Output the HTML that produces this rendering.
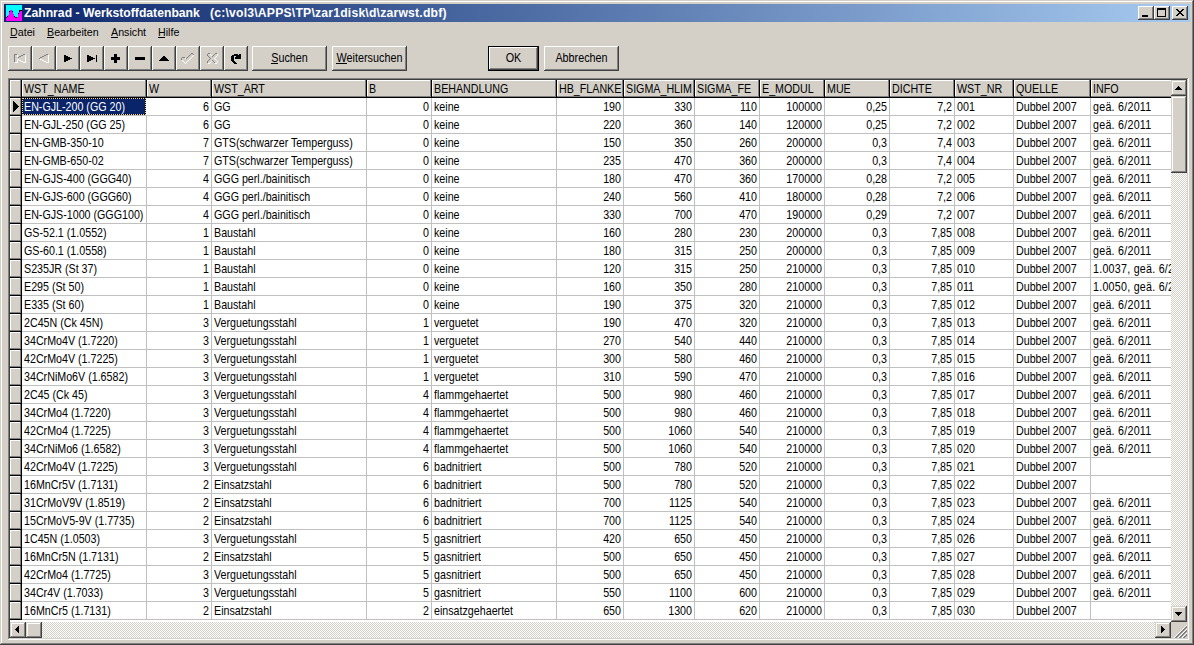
<!DOCTYPE html><html><head><meta charset="utf-8"><style>
*{margin:0;padding:0}
html,body{width:1194px;height:645px;overflow:hidden;background:#D4D0C8}
body{position:relative;font-family:"Liberation Sans",sans-serif}
div,span,svg{position:absolute}
span{white-space:nowrap;line-height:13px}
.g{font-size:10.7px;line-height:13px;transform:scaleY(1.2);transform-origin:0 10px}
.m{font-size:10.7px;line-height:13px;color:#000}
.b{font-size:10.8px;line-height:13px;text-align:center;color:#000;transform:scaleY(1.2);transform-origin:0 10px}
.tt{font-size:12.2px;font-weight:bold;color:#fff;line-height:18px}
u{text-decoration:none;border-bottom:1px solid #000}
</style></head><body><div style="left:0px;top:0px;width:1193px;height:1px;background:#D4D0C8;"></div><div style="left:0px;top:0px;width:1px;height:644px;background:#D4D0C8;"></div><div style="left:1px;top:1px;width:1191px;height:1px;background:#FFFFFF;"></div><div style="left:1px;top:1px;width:1px;height:642px;background:#FFFFFF;"></div><div style="left:0px;top:644px;width:1194px;height:1px;background:#404040;"></div><div style="left:1193px;top:0px;width:1px;height:645px;background:#404040;"></div><div style="left:1px;top:643px;width:1192px;height:1px;background:#808080;"></div><div style="left:1192px;top:1px;width:1px;height:643px;background:#808080;"></div><div style="left:4px;top:4px;width:1186px;height:18px;background:linear-gradient(to right,#0A246A,#A6CAF0);"></div><svg width="16" height="16" shape-rendering="crispEdges" style="position:absolute;left:6px;top:5px"><rect width="16" height="16" fill="#00FFFF"/><rect x="0" y="13" width="1" height="3" fill="#FF00FF"/><rect x="1" y="12" width="1" height="4" fill="#FF00FF"/><rect x="2" y="10" width="1" height="6" fill="#FF00FF"/><rect x="3" y="7" width="1" height="9" fill="#FF00FF"/><rect x="4" y="5" width="1" height="11" fill="#FF00FF"/><rect x="5" y="5" width="1" height="11" fill="#FF00FF"/><rect x="6" y="7" width="1" height="9" fill="#FF00FF"/><rect x="7" y="9" width="1" height="7" fill="#FF00FF"/><rect x="8" y="12" width="1" height="4" fill="#FF00FF"/><rect x="9" y="13" width="1" height="3" fill="#FF00FF"/><rect x="10" y="13" width="1" height="3" fill="#FF00FF"/><rect x="11" y="12" width="1" height="4" fill="#FF00FF"/><rect x="12" y="9" width="1" height="7" fill="#FF00FF"/><rect x="13" y="7" width="1" height="9" fill="#FF00FF"/><rect x="14" y="6" width="1" height="10" fill="#FF00FF"/><rect x="15" y="6" width="1" height="10" fill="#FF00FF"/><rect x="0" y="12" width="1" height="1" fill="#000"/><rect x="1" y="11" width="1" height="1" fill="#000"/><rect x="3" y="6" width="1" height="1" fill="#000"/><rect x="6" y="6" width="1" height="1" fill="#000"/><rect x="8" y="11" width="1" height="1" fill="#000"/><rect x="9" y="12" width="1" height="1" fill="#000"/><rect x="10" y="12" width="1" height="1" fill="#000"/><rect x="12" y="8" width="1" height="1" fill="#000"/><rect x="13" y="6" width="1" height="1" fill="#000"/><rect x="13" y="5" width="1" height="1" fill="#000"/><rect x="14" y="5" width="1" height="1" fill="#000"/><rect x="15" y="5" width="1" height="1" fill="#000"/></svg><span class="tt" style="left:24px;top:4px">Zahnrad - Werkstoffdatenbank</span><span class="tt" style="left:210px;top:4px;letter-spacing:0.2px">(c:\vol3\APPS\TP\zar1disk\d\zarwst.dbf)</span><div style="left:1138px;top:6px;width:16px;height:14px;background:#D4D0C8;"></div><div style="left:1138px;top:6px;width:16px;height:1px;background:#FFFFFF;"></div><div style="left:1138px;top:6px;width:1px;height:14px;background:#FFFFFF;"></div><div style="left:1138px;top:19px;width:16px;height:1px;background:#404040;"></div><div style="left:1153px;top:6px;width:1px;height:14px;background:#404040;"></div><div style="left:1139px;top:18px;width:14px;height:1px;background:#808080;"></div><div style="left:1152px;top:7px;width:1px;height:12px;background:#808080;"></div><div style="left:1154px;top:6px;width:16px;height:14px;background:#D4D0C8;"></div><div style="left:1154px;top:6px;width:16px;height:1px;background:#FFFFFF;"></div><div style="left:1154px;top:6px;width:1px;height:14px;background:#FFFFFF;"></div><div style="left:1154px;top:19px;width:16px;height:1px;background:#404040;"></div><div style="left:1169px;top:6px;width:1px;height:14px;background:#404040;"></div><div style="left:1155px;top:18px;width:14px;height:1px;background:#808080;"></div><div style="left:1168px;top:7px;width:1px;height:12px;background:#808080;"></div><div style="left:1172px;top:6px;width:16px;height:14px;background:#D4D0C8;"></div><div style="left:1172px;top:6px;width:16px;height:1px;background:#FFFFFF;"></div><div style="left:1172px;top:6px;width:1px;height:14px;background:#FFFFFF;"></div><div style="left:1172px;top:19px;width:16px;height:1px;background:#404040;"></div><div style="left:1187px;top:6px;width:1px;height:14px;background:#404040;"></div><div style="left:1173px;top:18px;width:14px;height:1px;background:#808080;"></div><div style="left:1186px;top:7px;width:1px;height:12px;background:#808080;"></div><div style="left:1142px;top:15px;width:6px;height:2px;background:#000;"></div><div style="left:1157px;top:8px;width:9px;height:9px;background:transparent;border:1px solid #000;border-top-width:2px;box-sizing:border-box;"></div><svg width="16" height="14" style="position:absolute;left:1172px;top:6px" shape-rendering="crispEdges"><rect x="4" y="3" width="2" height="1" fill="#000"/><rect x="10" y="3" width="2" height="1" fill="#000"/><rect x="5" y="4" width="2" height="1" fill="#000"/><rect x="9" y="4" width="2" height="1" fill="#000"/><rect x="6" y="5" width="2" height="1" fill="#000"/><rect x="8" y="5" width="2" height="1" fill="#000"/><rect x="7" y="6" width="2" height="1" fill="#000"/><rect x="7" y="6" width="2" height="1" fill="#000"/><rect x="8" y="7" width="2" height="1" fill="#000"/><rect x="6" y="7" width="2" height="1" fill="#000"/><rect x="9" y="8" width="2" height="1" fill="#000"/><rect x="5" y="8" width="2" height="1" fill="#000"/><rect x="10" y="9" width="2" height="1" fill="#000"/><rect x="4" y="9" width="2" height="1" fill="#000"/></svg><span class="m" style="left:10px;top:26px;">Datei</span><div style="left:10px;top:37px;width:7px;height:1px;background:#000;"></div><span class="m" style="left:47px;top:26px;">Bearbeiten</span><div style="left:47px;top:37px;width:7px;height:1px;background:#000;"></div><span class="m" style="left:111px;top:26px;">Ansicht</span><div style="left:111px;top:37px;width:7px;height:1px;background:#000;"></div><span class="m" style="left:158px;top:26px;">Hilfe</span><div style="left:158px;top:37px;width:7px;height:1px;background:#000;"></div><div style="left:8px;top:46px;width:24px;height:25px;background:#D4D0C8;"></div><div style="left:8px;top:46px;width:24px;height:1px;background:#FFFFFF;"></div><div style="left:8px;top:46px;width:1px;height:25px;background:#FFFFFF;"></div><div style="left:8px;top:70px;width:24px;height:1px;background:#404040;"></div><div style="left:31px;top:46px;width:1px;height:25px;background:#404040;"></div><div style="left:9px;top:69px;width:22px;height:1px;background:#808080;"></div><div style="left:30px;top:47px;width:1px;height:23px;background:#808080;"></div><div style="left:32px;top:46px;width:24px;height:25px;background:#D4D0C8;"></div><div style="left:32px;top:46px;width:24px;height:1px;background:#FFFFFF;"></div><div style="left:32px;top:46px;width:1px;height:25px;background:#FFFFFF;"></div><div style="left:32px;top:70px;width:24px;height:1px;background:#404040;"></div><div style="left:55px;top:46px;width:1px;height:25px;background:#404040;"></div><div style="left:33px;top:69px;width:22px;height:1px;background:#808080;"></div><div style="left:54px;top:47px;width:1px;height:23px;background:#808080;"></div><div style="left:56px;top:46px;width:24px;height:25px;background:#D4D0C8;"></div><div style="left:56px;top:46px;width:24px;height:1px;background:#FFFFFF;"></div><div style="left:56px;top:46px;width:1px;height:25px;background:#FFFFFF;"></div><div style="left:56px;top:70px;width:24px;height:1px;background:#404040;"></div><div style="left:79px;top:46px;width:1px;height:25px;background:#404040;"></div><div style="left:57px;top:69px;width:22px;height:1px;background:#808080;"></div><div style="left:78px;top:47px;width:1px;height:23px;background:#808080;"></div><div style="left:80px;top:46px;width:24px;height:25px;background:#D4D0C8;"></div><div style="left:80px;top:46px;width:24px;height:1px;background:#FFFFFF;"></div><div style="left:80px;top:46px;width:1px;height:25px;background:#FFFFFF;"></div><div style="left:80px;top:70px;width:24px;height:1px;background:#404040;"></div><div style="left:103px;top:46px;width:1px;height:25px;background:#404040;"></div><div style="left:81px;top:69px;width:22px;height:1px;background:#808080;"></div><div style="left:102px;top:47px;width:1px;height:23px;background:#808080;"></div><div style="left:104px;top:46px;width:24px;height:25px;background:#D4D0C8;"></div><div style="left:104px;top:46px;width:24px;height:1px;background:#FFFFFF;"></div><div style="left:104px;top:46px;width:1px;height:25px;background:#FFFFFF;"></div><div style="left:104px;top:70px;width:24px;height:1px;background:#404040;"></div><div style="left:127px;top:46px;width:1px;height:25px;background:#404040;"></div><div style="left:105px;top:69px;width:22px;height:1px;background:#808080;"></div><div style="left:126px;top:47px;width:1px;height:23px;background:#808080;"></div><div style="left:128px;top:46px;width:24px;height:25px;background:#D4D0C8;"></div><div style="left:128px;top:46px;width:24px;height:1px;background:#FFFFFF;"></div><div style="left:128px;top:46px;width:1px;height:25px;background:#FFFFFF;"></div><div style="left:128px;top:70px;width:24px;height:1px;background:#404040;"></div><div style="left:151px;top:46px;width:1px;height:25px;background:#404040;"></div><div style="left:129px;top:69px;width:22px;height:1px;background:#808080;"></div><div style="left:150px;top:47px;width:1px;height:23px;background:#808080;"></div><div style="left:152px;top:46px;width:24px;height:25px;background:#D4D0C8;"></div><div style="left:152px;top:46px;width:24px;height:1px;background:#FFFFFF;"></div><div style="left:152px;top:46px;width:1px;height:25px;background:#FFFFFF;"></div><div style="left:152px;top:70px;width:24px;height:1px;background:#404040;"></div><div style="left:175px;top:46px;width:1px;height:25px;background:#404040;"></div><div style="left:153px;top:69px;width:22px;height:1px;background:#808080;"></div><div style="left:174px;top:47px;width:1px;height:23px;background:#808080;"></div><div style="left:176px;top:46px;width:24px;height:25px;background:#D4D0C8;"></div><div style="left:176px;top:46px;width:24px;height:1px;background:#FFFFFF;"></div><div style="left:176px;top:46px;width:1px;height:25px;background:#FFFFFF;"></div><div style="left:176px;top:70px;width:24px;height:1px;background:#404040;"></div><div style="left:199px;top:46px;width:1px;height:25px;background:#404040;"></div><div style="left:177px;top:69px;width:22px;height:1px;background:#808080;"></div><div style="left:198px;top:47px;width:1px;height:23px;background:#808080;"></div><div style="left:200px;top:46px;width:24px;height:25px;background:#D4D0C8;"></div><div style="left:200px;top:46px;width:24px;height:1px;background:#FFFFFF;"></div><div style="left:200px;top:46px;width:1px;height:25px;background:#FFFFFF;"></div><div style="left:200px;top:70px;width:24px;height:1px;background:#404040;"></div><div style="left:223px;top:46px;width:1px;height:25px;background:#404040;"></div><div style="left:201px;top:69px;width:22px;height:1px;background:#808080;"></div><div style="left:222px;top:47px;width:1px;height:23px;background:#808080;"></div><div style="left:224px;top:46px;width:24px;height:25px;background:#D4D0C8;"></div><div style="left:224px;top:46px;width:24px;height:1px;background:#FFFFFF;"></div><div style="left:224px;top:46px;width:1px;height:25px;background:#FFFFFF;"></div><div style="left:224px;top:70px;width:24px;height:1px;background:#404040;"></div><div style="left:247px;top:46px;width:1px;height:25px;background:#404040;"></div><div style="left:225px;top:69px;width:22px;height:1px;background:#808080;"></div><div style="left:246px;top:47px;width:1px;height:23px;background:#808080;"></div><svg width="12" height="9" style="position:absolute;left:14px;top:54px" shape-rendering="crispEdges"><rect x="0" y="0" width="3" height="1" fill="#808080"/><rect x="0" y="1" width="1" height="7" fill="#808080"/><rect x="4" y="3" width="1" height="1" fill="#808080"/><rect x="5" y="2" width="2" height="1" fill="#808080"/><rect x="7" y="1" width="2" height="1" fill="#808080"/><rect x="9" y="0" width="2" height="1" fill="#808080"/><rect x="3" y="1" width="1" height="2" fill="#FFFFFF"/><rect x="1" y="8" width="3" height="1" fill="#FFFFFF"/><rect x="3" y="5" width="1" height="3" fill="#FFFFFF"/><rect x="4" y="5" width="1" height="1" fill="#FFFFFF"/><rect x="5" y="6" width="2" height="1" fill="#FFFFFF"/><rect x="7" y="7" width="2" height="1" fill="#FFFFFF"/><rect x="9" y="8" width="2" height="1" fill="#FFFFFF"/><rect x="11" y="1" width="1" height="8" fill="#FFFFFF"/></svg><svg width="10" height="9" style="position:absolute;left:39px;top:54px" shape-rendering="crispEdges"><rect x="0" y="4" width="1" height="1" fill="#808080"/><rect x="1" y="3" width="2" height="1" fill="#808080"/><rect x="3" y="2" width="2" height="1" fill="#808080"/><rect x="5" y="1" width="2" height="1" fill="#808080"/><rect x="7" y="0" width="2" height="1" fill="#808080"/><rect x="1" y="5" width="2" height="1" fill="#FFFFFF"/><rect x="3" y="6" width="2" height="1" fill="#FFFFFF"/><rect x="5" y="7" width="2" height="1" fill="#FFFFFF"/><rect x="7" y="8" width="3" height="1" fill="#FFFFFF"/><rect x="9" y="1" width="1" height="8" fill="#FFFFFF"/></svg><svg width="8" height="7" style="position:absolute;left:64px;top:55px" shape-rendering="crispEdges"><rect x="0" y="0" width="2" height="7" fill="#000"/><rect x="2" y="1" width="2" height="5" fill="#000"/><rect x="4" y="2" width="2" height="3" fill="#000"/><rect x="6" y="3" width="2" height="1" fill="#000"/></svg><svg width="10" height="7" style="position:absolute;left:87px;top:55px" shape-rendering="crispEdges"><rect x="0" y="0" width="2" height="7" fill="#000"/><rect x="2" y="1" width="2" height="5" fill="#000"/><rect x="4" y="2" width="2" height="3" fill="#000"/><rect x="6" y="3" width="2" height="1" fill="#000"/><rect x="9" y="0" width="1" height="7" fill="#000"/></svg><svg width="9" height="9" style="position:absolute;left:111px;top:54px" shape-rendering="crispEdges"><rect x="3" y="0" width="3" height="9" fill="#000"/><rect x="0" y="3" width="9" height="3" fill="#000"/></svg><svg width="10" height="3" style="position:absolute;left:135px;top:57px" shape-rendering="crispEdges"><rect x="0" y="0" width="10" height="3" fill="#000"/></svg><svg width="10" height="5" style="position:absolute;left:159px;top:56px" shape-rendering="crispEdges"><rect x="4" y="0" width="2" height="1" fill="#000"/><rect x="3" y="1" width="4" height="1" fill="#000"/><rect x="2" y="2" width="6" height="1" fill="#000"/><rect x="1" y="3" width="8" height="1" fill="#000"/><rect x="0" y="4" width="10" height="1" fill="#000"/></svg><svg width="13" height="11" style="position:absolute;left:181px;top:53px" shape-rendering="crispEdges"><rect x="0" y="5" width="1" height="2" fill="#808080"/><rect x="1" y="4" width="3" height="1" fill="#808080"/><rect x="5" y="5" width="1" height="1" fill="#808080"/><rect x="6" y="4" width="1" height="1" fill="#808080"/><rect x="7" y="3" width="1" height="1" fill="#808080"/><rect x="8" y="2" width="1" height="1" fill="#808080"/><rect x="9" y="1" width="1" height="1" fill="#808080"/><rect x="10" y="0" width="2" height="1" fill="#808080"/><rect x="12" y="1" width="1" height="1" fill="#808080"/><rect x="4" y="5" width="1" height="1" fill="#FFFFFF"/><rect x="1" y="7" width="1" height="1" fill="#FFFFFF"/><rect x="2" y="8" width="1" height="1" fill="#FFFFFF"/><rect x="3" y="9" width="1" height="1" fill="#FFFFFF"/><rect x="4" y="10" width="1" height="1" fill="#FFFFFF"/><rect x="5" y="9" width="1" height="1" fill="#FFFFFF"/><rect x="6" y="8" width="1" height="1" fill="#FFFFFF"/><rect x="7" y="7" width="1" height="1" fill="#FFFFFF"/><rect x="8" y="6" width="1" height="1" fill="#FFFFFF"/><rect x="9" y="5" width="1" height="1" fill="#FFFFFF"/><rect x="10" y="4" width="1" height="1" fill="#FFFFFF"/><rect x="11" y="3" width="1" height="1" fill="#FFFFFF"/><rect x="12" y="2" width="1" height="1" fill="#FFFFFF"/></svg><svg width="11" height="11" style="position:absolute;left:207px;top:53px" shape-rendering="crispEdges"><rect x="1" y="0" width="2" height="1" fill="#808080"/><rect x="0" y="1" width="1" height="2" fill="#808080"/><rect x="1" y="3" width="1" height="1" fill="#808080"/><rect x="2" y="4" width="1" height="1" fill="#808080"/><rect x="3" y="5" width="1" height="1" fill="#808080"/><rect x="2" y="6" width="1" height="1" fill="#808080"/><rect x="1" y="7" width="1" height="1" fill="#808080"/><rect x="0" y="8" width="1" height="2" fill="#808080"/><rect x="5" y="3" width="1" height="1" fill="#808080"/><rect x="6" y="2" width="1" height="1" fill="#808080"/><rect x="7" y="1" width="1" height="1" fill="#808080"/><rect x="8" y="0" width="2" height="1" fill="#808080"/><rect x="5" y="7" width="1" height="1" fill="#808080"/><rect x="6" y="8" width="1" height="1" fill="#808080"/><rect x="7" y="9" width="1" height="1" fill="#808080"/><rect x="3" y="1" width="1" height="1" fill="#FFFFFF"/><rect x="4" y="2" width="1" height="1" fill="#FFFFFF"/><rect x="10" y="1" width="1" height="2" fill="#FFFFFF"/><rect x="9" y="3" width="1" height="1" fill="#FFFFFF"/><rect x="8" y="4" width="1" height="1" fill="#FFFFFF"/><rect x="7" y="5" width="1" height="1" fill="#FFFFFF"/><rect x="8" y="6" width="1" height="1" fill="#FFFFFF"/><rect x="9" y="7" width="1" height="1" fill="#FFFFFF"/><rect x="10" y="8" width="1" height="2" fill="#FFFFFF"/><rect x="4" y="8" width="1" height="1" fill="#FFFFFF"/><rect x="3" y="9" width="1" height="1" fill="#FFFFFF"/><rect x="1" y="10" width="2" height="1" fill="#FFFFFF"/><rect x="8" y="10" width="2" height="1" fill="#FFFFFF"/></svg><svg width="10" height="10" style="position:absolute;left:231px;top:54px" shape-rendering="crispEdges"><rect x="3" y="0" width="4" height="1" fill="#000"/><rect x="8" y="0" width="2" height="1" fill="#000"/><rect x="1" y="1" width="7" height="1" fill="#000"/><rect x="8" y="1" width="2" height="1" fill="#000"/><rect x="0" y="2" width="3" height="1" fill="#000"/><rect x="5" y="2" width="5" height="1" fill="#000"/><rect x="0" y="3" width="3" height="1" fill="#000"/><rect x="4" y="3" width="6" height="1" fill="#000"/><rect x="0" y="4" width="3" height="1" fill="#000"/><rect x="4" y="4" width="6" height="1" fill="#000"/><rect x="0" y="5" width="3" height="1" fill="#000"/><rect x="0" y="6" width="3" height="1" fill="#000"/><rect x="1" y="7" width="3" height="1" fill="#000"/><rect x="2" y="8" width="3" height="1" fill="#000"/><rect x="3" y="9" width="3" height="1" fill="#000"/></svg><div style="left:252px;top:46px;width:75px;height:25px;background:#D4D0C8;"></div><div style="left:252px;top:46px;width:75px;height:1px;background:#FFFFFF;"></div><div style="left:252px;top:46px;width:1px;height:25px;background:#FFFFFF;"></div><div style="left:252px;top:70px;width:75px;height:1px;background:#404040;"></div><div style="left:326px;top:46px;width:1px;height:25px;background:#404040;"></div><div style="left:253px;top:69px;width:73px;height:1px;background:#808080;"></div><div style="left:325px;top:47px;width:1px;height:23px;background:#808080;"></div><span class="b" style="left:252px;width:75px;top:52px">Suchen</span><div style="left:332px;top:46px;width:75px;height:25px;background:#D4D0C8;"></div><div style="left:332px;top:46px;width:75px;height:1px;background:#FFFFFF;"></div><div style="left:332px;top:46px;width:1px;height:25px;background:#FFFFFF;"></div><div style="left:332px;top:70px;width:75px;height:1px;background:#404040;"></div><div style="left:406px;top:46px;width:1px;height:25px;background:#404040;"></div><div style="left:333px;top:69px;width:73px;height:1px;background:#808080;"></div><div style="left:405px;top:47px;width:1px;height:23px;background:#808080;"></div><span class="b" style="left:332px;width:75px;top:52px">Weitersuchen</span><div style="left:271px;top:63px;width:7px;height:1px;background:#000;"></div><div style="left:336px;top:63px;width:11px;height:1px;background:#000;"></div><div style="left:488px;top:46px;width:51px;height:25px;background:#000;"></div><div style="left:489px;top:47px;width:49px;height:23px;background:#D4D0C8;"></div><div style="left:489px;top:47px;width:49px;height:1px;background:#FFFFFF;"></div><div style="left:489px;top:47px;width:1px;height:23px;background:#FFFFFF;"></div><div style="left:489px;top:69px;width:49px;height:1px;background:#404040;"></div><div style="left:537px;top:47px;width:1px;height:23px;background:#404040;"></div><div style="left:490px;top:68px;width:47px;height:1px;background:#808080;"></div><div style="left:536px;top:48px;width:1px;height:21px;background:#808080;"></div><span class="b" style="left:488px;width:51px;top:52px">OK</span><div style="left:544px;top:46px;width:75px;height:25px;background:#D4D0C8;"></div><div style="left:544px;top:46px;width:75px;height:1px;background:#FFFFFF;"></div><div style="left:544px;top:46px;width:1px;height:25px;background:#FFFFFF;"></div><div style="left:544px;top:70px;width:75px;height:1px;background:#404040;"></div><div style="left:618px;top:46px;width:1px;height:25px;background:#404040;"></div><div style="left:545px;top:69px;width:73px;height:1px;background:#808080;"></div><div style="left:617px;top:47px;width:1px;height:23px;background:#808080;"></div><span class="b" style="left:544px;width:75px;top:52px">Abbrechen</span><div style="left:8px;top:78px;width:1180px;height:1px;background:#808080;"></div><div style="left:8px;top:78px;width:1px;height:561px;background:#808080;"></div><div style="left:9px;top:79px;width:1178px;height:1px;background:#404040;"></div><div style="left:9px;top:79px;width:1px;height:559px;background:#404040;"></div><div style="left:8px;top:639px;width:1181px;height:1px;background:#FFFFFF;"></div><div style="left:1188px;top:78px;width:1px;height:562px;background:#FFFFFF;"></div><div style="left:9px;top:638px;width:1179px;height:1px;background:#D4D0C8;"></div><div style="left:1187px;top:79px;width:1px;height:560px;background:#D4D0C8;"></div><div style="left:10px;top:80px;width:1177px;height:558px;background:#fff;"></div><div style="left:10px;top:80px;width:1161px;height:540px;overflow:hidden;background:#fff"><div style="left:12px;top:35px;width:1149px;height:1px;background:#C0C0C0;"></div><div style="left:12px;top:53px;width:1149px;height:1px;background:#C0C0C0;"></div><div style="left:12px;top:71px;width:1149px;height:1px;background:#C0C0C0;"></div><div style="left:12px;top:89px;width:1149px;height:1px;background:#C0C0C0;"></div><div style="left:12px;top:107px;width:1149px;height:1px;background:#C0C0C0;"></div><div style="left:12px;top:125px;width:1149px;height:1px;background:#C0C0C0;"></div><div style="left:12px;top:143px;width:1149px;height:1px;background:#C0C0C0;"></div><div style="left:12px;top:161px;width:1149px;height:1px;background:#C0C0C0;"></div><div style="left:12px;top:179px;width:1149px;height:1px;background:#C0C0C0;"></div><div style="left:12px;top:197px;width:1149px;height:1px;background:#C0C0C0;"></div><div style="left:12px;top:215px;width:1149px;height:1px;background:#C0C0C0;"></div><div style="left:12px;top:233px;width:1149px;height:1px;background:#C0C0C0;"></div><div style="left:12px;top:251px;width:1149px;height:1px;background:#C0C0C0;"></div><div style="left:12px;top:269px;width:1149px;height:1px;background:#C0C0C0;"></div><div style="left:12px;top:287px;width:1149px;height:1px;background:#C0C0C0;"></div><div style="left:12px;top:305px;width:1149px;height:1px;background:#C0C0C0;"></div><div style="left:12px;top:323px;width:1149px;height:1px;background:#C0C0C0;"></div><div style="left:12px;top:341px;width:1149px;height:1px;background:#C0C0C0;"></div><div style="left:12px;top:359px;width:1149px;height:1px;background:#C0C0C0;"></div><div style="left:12px;top:377px;width:1149px;height:1px;background:#C0C0C0;"></div><div style="left:12px;top:395px;width:1149px;height:1px;background:#C0C0C0;"></div><div style="left:12px;top:413px;width:1149px;height:1px;background:#C0C0C0;"></div><div style="left:12px;top:431px;width:1149px;height:1px;background:#C0C0C0;"></div><div style="left:12px;top:449px;width:1149px;height:1px;background:#C0C0C0;"></div><div style="left:12px;top:467px;width:1149px;height:1px;background:#C0C0C0;"></div><div style="left:12px;top:485px;width:1149px;height:1px;background:#C0C0C0;"></div><div style="left:12px;top:503px;width:1149px;height:1px;background:#C0C0C0;"></div><div style="left:12px;top:521px;width:1149px;height:1px;background:#C0C0C0;"></div><div style="left:12px;top:539px;width:1149px;height:1px;background:#C0C0C0;"></div><div style="left:136px;top:18px;width:1px;height:522px;background:#C0C0C0;"></div><div style="left:201px;top:18px;width:1px;height:522px;background:#C0C0C0;"></div><div style="left:356px;top:18px;width:1px;height:522px;background:#C0C0C0;"></div><div style="left:421px;top:18px;width:1px;height:522px;background:#C0C0C0;"></div><div style="left:546px;top:18px;width:1px;height:522px;background:#C0C0C0;"></div><div style="left:613px;top:18px;width:1px;height:522px;background:#C0C0C0;"></div><div style="left:684px;top:18px;width:1px;height:522px;background:#C0C0C0;"></div><div style="left:749px;top:18px;width:1px;height:522px;background:#C0C0C0;"></div><div style="left:814px;top:18px;width:1px;height:522px;background:#C0C0C0;"></div><div style="left:879px;top:18px;width:1px;height:522px;background:#C0C0C0;"></div><div style="left:944px;top:18px;width:1px;height:522px;background:#C0C0C0;"></div><div style="left:1003px;top:18px;width:1px;height:522px;background:#C0C0C0;"></div><div style="left:1080px;top:18px;width:1px;height:522px;background:#C0C0C0;"></div><div style="left:0px;top:0px;width:1161px;height:18px;background:#D4D0C8;"></div><div style="left:0px;top:17px;width:1161px;height:1px;background:#000;"></div><div style="left:0px;top:0px;width:11px;height:1px;background:#FFFFFF;"></div><div style="left:0px;top:0px;width:1px;height:17px;background:#FFFFFF;"></div><div style="left:0px;top:16px;width:11px;height:1px;background:#808080;"></div><div style="left:10px;top:0px;width:1px;height:17px;background:#808080;"></div><div style="left:11px;top:0px;width:1px;height:18px;background:#000;"></div><div style="left:12px;top:0px;width:124px;height:1px;background:#FFFFFF;"></div><div style="left:12px;top:0px;width:1px;height:17px;background:#FFFFFF;"></div><div style="left:12px;top:16px;width:124px;height:1px;background:#808080;"></div><div style="left:135px;top:0px;width:1px;height:17px;background:#808080;"></div><div style="left:136px;top:0px;width:1px;height:18px;background:#000;"></div><span class="g" style="left:14px;top:3px">WST_NAME</span><div style="left:137px;top:0px;width:64px;height:1px;background:#FFFFFF;"></div><div style="left:137px;top:0px;width:1px;height:17px;background:#FFFFFF;"></div><div style="left:137px;top:16px;width:64px;height:1px;background:#808080;"></div><div style="left:200px;top:0px;width:1px;height:17px;background:#808080;"></div><div style="left:201px;top:0px;width:1px;height:18px;background:#000;"></div><span class="g" style="left:139px;top:3px">W</span><div style="left:202px;top:0px;width:154px;height:1px;background:#FFFFFF;"></div><div style="left:202px;top:0px;width:1px;height:17px;background:#FFFFFF;"></div><div style="left:202px;top:16px;width:154px;height:1px;background:#808080;"></div><div style="left:355px;top:0px;width:1px;height:17px;background:#808080;"></div><div style="left:356px;top:0px;width:1px;height:18px;background:#000;"></div><span class="g" style="left:204px;top:3px">WST_ART</span><div style="left:357px;top:0px;width:64px;height:1px;background:#FFFFFF;"></div><div style="left:357px;top:0px;width:1px;height:17px;background:#FFFFFF;"></div><div style="left:357px;top:16px;width:64px;height:1px;background:#808080;"></div><div style="left:420px;top:0px;width:1px;height:17px;background:#808080;"></div><div style="left:421px;top:0px;width:1px;height:18px;background:#000;"></div><span class="g" style="left:359px;top:3px">B</span><div style="left:422px;top:0px;width:124px;height:1px;background:#FFFFFF;"></div><div style="left:422px;top:0px;width:1px;height:17px;background:#FFFFFF;"></div><div style="left:422px;top:16px;width:124px;height:1px;background:#808080;"></div><div style="left:545px;top:0px;width:1px;height:17px;background:#808080;"></div><div style="left:546px;top:0px;width:1px;height:18px;background:#000;"></div><span class="g" style="left:424px;top:3px">BEHANDLUNG</span><div style="left:547px;top:0px;width:66px;height:1px;background:#FFFFFF;"></div><div style="left:547px;top:0px;width:1px;height:17px;background:#FFFFFF;"></div><div style="left:547px;top:16px;width:66px;height:1px;background:#808080;"></div><div style="left:612px;top:0px;width:1px;height:17px;background:#808080;"></div><div style="left:613px;top:0px;width:1px;height:18px;background:#000;"></div><span class="g" style="left:549px;top:3px">HB_FLANKE</span><div style="left:614px;top:0px;width:70px;height:1px;background:#FFFFFF;"></div><div style="left:614px;top:0px;width:1px;height:17px;background:#FFFFFF;"></div><div style="left:614px;top:16px;width:70px;height:1px;background:#808080;"></div><div style="left:683px;top:0px;width:1px;height:17px;background:#808080;"></div><div style="left:684px;top:0px;width:1px;height:18px;background:#000;"></div><span class="g" style="left:616px;top:3px">SIGMA_HLIM</span><div style="left:685px;top:0px;width:64px;height:1px;background:#FFFFFF;"></div><div style="left:685px;top:0px;width:1px;height:17px;background:#FFFFFF;"></div><div style="left:685px;top:16px;width:64px;height:1px;background:#808080;"></div><div style="left:748px;top:0px;width:1px;height:17px;background:#808080;"></div><div style="left:749px;top:0px;width:1px;height:18px;background:#000;"></div><span class="g" style="left:687px;top:3px">SIGMA_FE</span><div style="left:750px;top:0px;width:64px;height:1px;background:#FFFFFF;"></div><div style="left:750px;top:0px;width:1px;height:17px;background:#FFFFFF;"></div><div style="left:750px;top:16px;width:64px;height:1px;background:#808080;"></div><div style="left:813px;top:0px;width:1px;height:17px;background:#808080;"></div><div style="left:814px;top:0px;width:1px;height:18px;background:#000;"></div><span class="g" style="left:752px;top:3px">E_MODUL</span><div style="left:815px;top:0px;width:64px;height:1px;background:#FFFFFF;"></div><div style="left:815px;top:0px;width:1px;height:17px;background:#FFFFFF;"></div><div style="left:815px;top:16px;width:64px;height:1px;background:#808080;"></div><div style="left:878px;top:0px;width:1px;height:17px;background:#808080;"></div><div style="left:879px;top:0px;width:1px;height:18px;background:#000;"></div><span class="g" style="left:817px;top:3px">MUE</span><div style="left:880px;top:0px;width:64px;height:1px;background:#FFFFFF;"></div><div style="left:880px;top:0px;width:1px;height:17px;background:#FFFFFF;"></div><div style="left:880px;top:16px;width:64px;height:1px;background:#808080;"></div><div style="left:943px;top:0px;width:1px;height:17px;background:#808080;"></div><div style="left:944px;top:0px;width:1px;height:18px;background:#000;"></div><span class="g" style="left:882px;top:3px">DICHTE</span><div style="left:945px;top:0px;width:58px;height:1px;background:#FFFFFF;"></div><div style="left:945px;top:0px;width:1px;height:17px;background:#FFFFFF;"></div><div style="left:945px;top:16px;width:58px;height:1px;background:#808080;"></div><div style="left:1002px;top:0px;width:1px;height:17px;background:#808080;"></div><div style="left:1003px;top:0px;width:1px;height:18px;background:#000;"></div><span class="g" style="left:947px;top:3px">WST_NR</span><div style="left:1004px;top:0px;width:76px;height:1px;background:#FFFFFF;"></div><div style="left:1004px;top:0px;width:1px;height:17px;background:#FFFFFF;"></div><div style="left:1004px;top:16px;width:76px;height:1px;background:#808080;"></div><div style="left:1079px;top:0px;width:1px;height:17px;background:#808080;"></div><div style="left:1080px;top:0px;width:1px;height:18px;background:#000;"></div><span class="g" style="left:1006px;top:3px">QUELLE</span><div style="left:1081px;top:0px;width:159px;height:1px;background:#FFFFFF;"></div><div style="left:1081px;top:0px;width:1px;height:17px;background:#FFFFFF;"></div><div style="left:1081px;top:16px;width:159px;height:1px;background:#808080;"></div><div style="left:1239px;top:0px;width:1px;height:17px;background:#808080;"></div><div style="left:1240px;top:0px;width:1px;height:18px;background:#000;"></div><span class="g" style="left:1083px;top:3px">INFO</span><div style="left:0px;top:18px;width:11px;height:17px;background:#D4D0C8;"></div><div style="left:0px;top:18px;width:11px;height:1px;background:#FFFFFF;"></div><div style="left:0px;top:18px;width:1px;height:17px;background:#FFFFFF;"></div><div style="left:0px;top:34px;width:11px;height:1px;background:#808080;"></div><div style="left:10px;top:18px;width:1px;height:17px;background:#808080;"></div><div style="left:0px;top:35px;width:12px;height:1px;background:#000;"></div><div style="left:11px;top:18px;width:1px;height:18px;background:#000;"></div><div style="left:0px;top:36px;width:11px;height:17px;background:#D4D0C8;"></div><div style="left:0px;top:36px;width:11px;height:1px;background:#FFFFFF;"></div><div style="left:0px;top:36px;width:1px;height:17px;background:#FFFFFF;"></div><div style="left:0px;top:52px;width:11px;height:1px;background:#808080;"></div><div style="left:10px;top:36px;width:1px;height:17px;background:#808080;"></div><div style="left:0px;top:53px;width:12px;height:1px;background:#000;"></div><div style="left:11px;top:36px;width:1px;height:18px;background:#000;"></div><div style="left:0px;top:54px;width:11px;height:17px;background:#D4D0C8;"></div><div style="left:0px;top:54px;width:11px;height:1px;background:#FFFFFF;"></div><div style="left:0px;top:54px;width:1px;height:17px;background:#FFFFFF;"></div><div style="left:0px;top:70px;width:11px;height:1px;background:#808080;"></div><div style="left:10px;top:54px;width:1px;height:17px;background:#808080;"></div><div style="left:0px;top:71px;width:12px;height:1px;background:#000;"></div><div style="left:11px;top:54px;width:1px;height:18px;background:#000;"></div><div style="left:0px;top:72px;width:11px;height:17px;background:#D4D0C8;"></div><div style="left:0px;top:72px;width:11px;height:1px;background:#FFFFFF;"></div><div style="left:0px;top:72px;width:1px;height:17px;background:#FFFFFF;"></div><div style="left:0px;top:88px;width:11px;height:1px;background:#808080;"></div><div style="left:10px;top:72px;width:1px;height:17px;background:#808080;"></div><div style="left:0px;top:89px;width:12px;height:1px;background:#000;"></div><div style="left:11px;top:72px;width:1px;height:18px;background:#000;"></div><div style="left:0px;top:90px;width:11px;height:17px;background:#D4D0C8;"></div><div style="left:0px;top:90px;width:11px;height:1px;background:#FFFFFF;"></div><div style="left:0px;top:90px;width:1px;height:17px;background:#FFFFFF;"></div><div style="left:0px;top:106px;width:11px;height:1px;background:#808080;"></div><div style="left:10px;top:90px;width:1px;height:17px;background:#808080;"></div><div style="left:0px;top:107px;width:12px;height:1px;background:#000;"></div><div style="left:11px;top:90px;width:1px;height:18px;background:#000;"></div><div style="left:0px;top:108px;width:11px;height:17px;background:#D4D0C8;"></div><div style="left:0px;top:108px;width:11px;height:1px;background:#FFFFFF;"></div><div style="left:0px;top:108px;width:1px;height:17px;background:#FFFFFF;"></div><div style="left:0px;top:124px;width:11px;height:1px;background:#808080;"></div><div style="left:10px;top:108px;width:1px;height:17px;background:#808080;"></div><div style="left:0px;top:125px;width:12px;height:1px;background:#000;"></div><div style="left:11px;top:108px;width:1px;height:18px;background:#000;"></div><div style="left:0px;top:126px;width:11px;height:17px;background:#D4D0C8;"></div><div style="left:0px;top:126px;width:11px;height:1px;background:#FFFFFF;"></div><div style="left:0px;top:126px;width:1px;height:17px;background:#FFFFFF;"></div><div style="left:0px;top:142px;width:11px;height:1px;background:#808080;"></div><div style="left:10px;top:126px;width:1px;height:17px;background:#808080;"></div><div style="left:0px;top:143px;width:12px;height:1px;background:#000;"></div><div style="left:11px;top:126px;width:1px;height:18px;background:#000;"></div><div style="left:0px;top:144px;width:11px;height:17px;background:#D4D0C8;"></div><div style="left:0px;top:144px;width:11px;height:1px;background:#FFFFFF;"></div><div style="left:0px;top:144px;width:1px;height:17px;background:#FFFFFF;"></div><div style="left:0px;top:160px;width:11px;height:1px;background:#808080;"></div><div style="left:10px;top:144px;width:1px;height:17px;background:#808080;"></div><div style="left:0px;top:161px;width:12px;height:1px;background:#000;"></div><div style="left:11px;top:144px;width:1px;height:18px;background:#000;"></div><div style="left:0px;top:162px;width:11px;height:17px;background:#D4D0C8;"></div><div style="left:0px;top:162px;width:11px;height:1px;background:#FFFFFF;"></div><div style="left:0px;top:162px;width:1px;height:17px;background:#FFFFFF;"></div><div style="left:0px;top:178px;width:11px;height:1px;background:#808080;"></div><div style="left:10px;top:162px;width:1px;height:17px;background:#808080;"></div><div style="left:0px;top:179px;width:12px;height:1px;background:#000;"></div><div style="left:11px;top:162px;width:1px;height:18px;background:#000;"></div><div style="left:0px;top:180px;width:11px;height:17px;background:#D4D0C8;"></div><div style="left:0px;top:180px;width:11px;height:1px;background:#FFFFFF;"></div><div style="left:0px;top:180px;width:1px;height:17px;background:#FFFFFF;"></div><div style="left:0px;top:196px;width:11px;height:1px;background:#808080;"></div><div style="left:10px;top:180px;width:1px;height:17px;background:#808080;"></div><div style="left:0px;top:197px;width:12px;height:1px;background:#000;"></div><div style="left:11px;top:180px;width:1px;height:18px;background:#000;"></div><div style="left:0px;top:198px;width:11px;height:17px;background:#D4D0C8;"></div><div style="left:0px;top:198px;width:11px;height:1px;background:#FFFFFF;"></div><div style="left:0px;top:198px;width:1px;height:17px;background:#FFFFFF;"></div><div style="left:0px;top:214px;width:11px;height:1px;background:#808080;"></div><div style="left:10px;top:198px;width:1px;height:17px;background:#808080;"></div><div style="left:0px;top:215px;width:12px;height:1px;background:#000;"></div><div style="left:11px;top:198px;width:1px;height:18px;background:#000;"></div><div style="left:0px;top:216px;width:11px;height:17px;background:#D4D0C8;"></div><div style="left:0px;top:216px;width:11px;height:1px;background:#FFFFFF;"></div><div style="left:0px;top:216px;width:1px;height:17px;background:#FFFFFF;"></div><div style="left:0px;top:232px;width:11px;height:1px;background:#808080;"></div><div style="left:10px;top:216px;width:1px;height:17px;background:#808080;"></div><div style="left:0px;top:233px;width:12px;height:1px;background:#000;"></div><div style="left:11px;top:216px;width:1px;height:18px;background:#000;"></div><div style="left:0px;top:234px;width:11px;height:17px;background:#D4D0C8;"></div><div style="left:0px;top:234px;width:11px;height:1px;background:#FFFFFF;"></div><div style="left:0px;top:234px;width:1px;height:17px;background:#FFFFFF;"></div><div style="left:0px;top:250px;width:11px;height:1px;background:#808080;"></div><div style="left:10px;top:234px;width:1px;height:17px;background:#808080;"></div><div style="left:0px;top:251px;width:12px;height:1px;background:#000;"></div><div style="left:11px;top:234px;width:1px;height:18px;background:#000;"></div><div style="left:0px;top:252px;width:11px;height:17px;background:#D4D0C8;"></div><div style="left:0px;top:252px;width:11px;height:1px;background:#FFFFFF;"></div><div style="left:0px;top:252px;width:1px;height:17px;background:#FFFFFF;"></div><div style="left:0px;top:268px;width:11px;height:1px;background:#808080;"></div><div style="left:10px;top:252px;width:1px;height:17px;background:#808080;"></div><div style="left:0px;top:269px;width:12px;height:1px;background:#000;"></div><div style="left:11px;top:252px;width:1px;height:18px;background:#000;"></div><div style="left:0px;top:270px;width:11px;height:17px;background:#D4D0C8;"></div><div style="left:0px;top:270px;width:11px;height:1px;background:#FFFFFF;"></div><div style="left:0px;top:270px;width:1px;height:17px;background:#FFFFFF;"></div><div style="left:0px;top:286px;width:11px;height:1px;background:#808080;"></div><div style="left:10px;top:270px;width:1px;height:17px;background:#808080;"></div><div style="left:0px;top:287px;width:12px;height:1px;background:#000;"></div><div style="left:11px;top:270px;width:1px;height:18px;background:#000;"></div><div style="left:0px;top:288px;width:11px;height:17px;background:#D4D0C8;"></div><div style="left:0px;top:288px;width:11px;height:1px;background:#FFFFFF;"></div><div style="left:0px;top:288px;width:1px;height:17px;background:#FFFFFF;"></div><div style="left:0px;top:304px;width:11px;height:1px;background:#808080;"></div><div style="left:10px;top:288px;width:1px;height:17px;background:#808080;"></div><div style="left:0px;top:305px;width:12px;height:1px;background:#000;"></div><div style="left:11px;top:288px;width:1px;height:18px;background:#000;"></div><div style="left:0px;top:306px;width:11px;height:17px;background:#D4D0C8;"></div><div style="left:0px;top:306px;width:11px;height:1px;background:#FFFFFF;"></div><div style="left:0px;top:306px;width:1px;height:17px;background:#FFFFFF;"></div><div style="left:0px;top:322px;width:11px;height:1px;background:#808080;"></div><div style="left:10px;top:306px;width:1px;height:17px;background:#808080;"></div><div style="left:0px;top:323px;width:12px;height:1px;background:#000;"></div><div style="left:11px;top:306px;width:1px;height:18px;background:#000;"></div><div style="left:0px;top:324px;width:11px;height:17px;background:#D4D0C8;"></div><div style="left:0px;top:324px;width:11px;height:1px;background:#FFFFFF;"></div><div style="left:0px;top:324px;width:1px;height:17px;background:#FFFFFF;"></div><div style="left:0px;top:340px;width:11px;height:1px;background:#808080;"></div><div style="left:10px;top:324px;width:1px;height:17px;background:#808080;"></div><div style="left:0px;top:341px;width:12px;height:1px;background:#000;"></div><div style="left:11px;top:324px;width:1px;height:18px;background:#000;"></div><div style="left:0px;top:342px;width:11px;height:17px;background:#D4D0C8;"></div><div style="left:0px;top:342px;width:11px;height:1px;background:#FFFFFF;"></div><div style="left:0px;top:342px;width:1px;height:17px;background:#FFFFFF;"></div><div style="left:0px;top:358px;width:11px;height:1px;background:#808080;"></div><div style="left:10px;top:342px;width:1px;height:17px;background:#808080;"></div><div style="left:0px;top:359px;width:12px;height:1px;background:#000;"></div><div style="left:11px;top:342px;width:1px;height:18px;background:#000;"></div><div style="left:0px;top:360px;width:11px;height:17px;background:#D4D0C8;"></div><div style="left:0px;top:360px;width:11px;height:1px;background:#FFFFFF;"></div><div style="left:0px;top:360px;width:1px;height:17px;background:#FFFFFF;"></div><div style="left:0px;top:376px;width:11px;height:1px;background:#808080;"></div><div style="left:10px;top:360px;width:1px;height:17px;background:#808080;"></div><div style="left:0px;top:377px;width:12px;height:1px;background:#000;"></div><div style="left:11px;top:360px;width:1px;height:18px;background:#000;"></div><div style="left:0px;top:378px;width:11px;height:17px;background:#D4D0C8;"></div><div style="left:0px;top:378px;width:11px;height:1px;background:#FFFFFF;"></div><div style="left:0px;top:378px;width:1px;height:17px;background:#FFFFFF;"></div><div style="left:0px;top:394px;width:11px;height:1px;background:#808080;"></div><div style="left:10px;top:378px;width:1px;height:17px;background:#808080;"></div><div style="left:0px;top:395px;width:12px;height:1px;background:#000;"></div><div style="left:11px;top:378px;width:1px;height:18px;background:#000;"></div><div style="left:0px;top:396px;width:11px;height:17px;background:#D4D0C8;"></div><div style="left:0px;top:396px;width:11px;height:1px;background:#FFFFFF;"></div><div style="left:0px;top:396px;width:1px;height:17px;background:#FFFFFF;"></div><div style="left:0px;top:412px;width:11px;height:1px;background:#808080;"></div><div style="left:10px;top:396px;width:1px;height:17px;background:#808080;"></div><div style="left:0px;top:413px;width:12px;height:1px;background:#000;"></div><div style="left:11px;top:396px;width:1px;height:18px;background:#000;"></div><div style="left:0px;top:414px;width:11px;height:17px;background:#D4D0C8;"></div><div style="left:0px;top:414px;width:11px;height:1px;background:#FFFFFF;"></div><div style="left:0px;top:414px;width:1px;height:17px;background:#FFFFFF;"></div><div style="left:0px;top:430px;width:11px;height:1px;background:#808080;"></div><div style="left:10px;top:414px;width:1px;height:17px;background:#808080;"></div><div style="left:0px;top:431px;width:12px;height:1px;background:#000;"></div><div style="left:11px;top:414px;width:1px;height:18px;background:#000;"></div><div style="left:0px;top:432px;width:11px;height:17px;background:#D4D0C8;"></div><div style="left:0px;top:432px;width:11px;height:1px;background:#FFFFFF;"></div><div style="left:0px;top:432px;width:1px;height:17px;background:#FFFFFF;"></div><div style="left:0px;top:448px;width:11px;height:1px;background:#808080;"></div><div style="left:10px;top:432px;width:1px;height:17px;background:#808080;"></div><div style="left:0px;top:449px;width:12px;height:1px;background:#000;"></div><div style="left:11px;top:432px;width:1px;height:18px;background:#000;"></div><div style="left:0px;top:450px;width:11px;height:17px;background:#D4D0C8;"></div><div style="left:0px;top:450px;width:11px;height:1px;background:#FFFFFF;"></div><div style="left:0px;top:450px;width:1px;height:17px;background:#FFFFFF;"></div><div style="left:0px;top:466px;width:11px;height:1px;background:#808080;"></div><div style="left:10px;top:450px;width:1px;height:17px;background:#808080;"></div><div style="left:0px;top:467px;width:12px;height:1px;background:#000;"></div><div style="left:11px;top:450px;width:1px;height:18px;background:#000;"></div><div style="left:0px;top:468px;width:11px;height:17px;background:#D4D0C8;"></div><div style="left:0px;top:468px;width:11px;height:1px;background:#FFFFFF;"></div><div style="left:0px;top:468px;width:1px;height:17px;background:#FFFFFF;"></div><div style="left:0px;top:484px;width:11px;height:1px;background:#808080;"></div><div style="left:10px;top:468px;width:1px;height:17px;background:#808080;"></div><div style="left:0px;top:485px;width:12px;height:1px;background:#000;"></div><div style="left:11px;top:468px;width:1px;height:18px;background:#000;"></div><div style="left:0px;top:486px;width:11px;height:17px;background:#D4D0C8;"></div><div style="left:0px;top:486px;width:11px;height:1px;background:#FFFFFF;"></div><div style="left:0px;top:486px;width:1px;height:17px;background:#FFFFFF;"></div><div style="left:0px;top:502px;width:11px;height:1px;background:#808080;"></div><div style="left:10px;top:486px;width:1px;height:17px;background:#808080;"></div><div style="left:0px;top:503px;width:12px;height:1px;background:#000;"></div><div style="left:11px;top:486px;width:1px;height:18px;background:#000;"></div><div style="left:0px;top:504px;width:11px;height:17px;background:#D4D0C8;"></div><div style="left:0px;top:504px;width:11px;height:1px;background:#FFFFFF;"></div><div style="left:0px;top:504px;width:1px;height:17px;background:#FFFFFF;"></div><div style="left:0px;top:520px;width:11px;height:1px;background:#808080;"></div><div style="left:10px;top:504px;width:1px;height:17px;background:#808080;"></div><div style="left:0px;top:521px;width:12px;height:1px;background:#000;"></div><div style="left:11px;top:504px;width:1px;height:18px;background:#000;"></div><div style="left:0px;top:522px;width:11px;height:17px;background:#D4D0C8;"></div><div style="left:0px;top:522px;width:11px;height:1px;background:#FFFFFF;"></div><div style="left:0px;top:522px;width:1px;height:17px;background:#FFFFFF;"></div><div style="left:0px;top:538px;width:11px;height:1px;background:#808080;"></div><div style="left:10px;top:522px;width:1px;height:17px;background:#808080;"></div><div style="left:0px;top:539px;width:12px;height:1px;background:#000;"></div><div style="left:11px;top:522px;width:1px;height:18px;background:#000;"></div><svg width="8" height="12" style="position:absolute;left:3px;top:21px" shape-rendering="crispEdges"><rect x="0" y="0" width="1" height="11" fill="#000"/><rect x="1" y="1" width="1" height="9" fill="#000"/><rect x="2" y="2" width="1" height="7" fill="#000"/><rect x="3" y="3" width="1" height="5" fill="#000"/><rect x="4" y="4" width="1" height="3" fill="#000"/><rect x="5" y="5" width="1" height="1" fill="#000"/></svg><div style="left:12px;top:18px;width:124px;height:17px;background:#0A246A;"></div><div style="left:12px;top:18px;width:124px;height:17px;background:transparent;box-sizing:border-box;border:1px solid #000;"></div><div style="left:12px;top:18px;width:124px;height:17px;background:transparent;box-sizing:border-box;border:1px dotted #F5DB95;"></div><div style="left:136px;top:18px;width:1px;height:17px;background:#fff;"></div><span class="g" style="left:14px;top:21px;color:#fff;">EN-GJL-200 (GG 20)</span><span class="g" style="right:962px;top:21px;color:#000">6</span><span class="g" style="left:204px;top:21px;color:#000;">GG</span><span class="g" style="right:742px;top:21px;color:#000">0</span><span class="g" style="left:424px;top:21px;color:#000;">keine</span><span class="g" style="right:550px;top:21px;color:#000">190</span><span class="g" style="right:479px;top:21px;color:#000">330</span><span class="g" style="right:414px;top:21px;color:#000">110</span><span class="g" style="right:349px;top:21px;color:#000">100000</span><span class="g" style="right:284px;top:21px;color:#000">0,25</span><span class="g" style="right:219px;top:21px;color:#000">7,2</span><span class="g" style="left:947px;top:21px;color:#000;">001</span><span class="g" style="left:1006px;top:21px;color:#000;">Dubbel 2007</span><span class="g" style="left:1083px;top:21px;color:#000;letter-spacing:0.25px">geä. 6/2011</span><span class="g" style="left:14px;top:39px;color:#000;">EN-GJL-250 (GG 25)</span><span class="g" style="right:962px;top:39px;color:#000">6</span><span class="g" style="left:204px;top:39px;color:#000;">GG</span><span class="g" style="right:742px;top:39px;color:#000">0</span><span class="g" style="left:424px;top:39px;color:#000;">keine</span><span class="g" style="right:550px;top:39px;color:#000">220</span><span class="g" style="right:479px;top:39px;color:#000">360</span><span class="g" style="right:414px;top:39px;color:#000">140</span><span class="g" style="right:349px;top:39px;color:#000">120000</span><span class="g" style="right:284px;top:39px;color:#000">0,25</span><span class="g" style="right:219px;top:39px;color:#000">7,2</span><span class="g" style="left:947px;top:39px;color:#000;">002</span><span class="g" style="left:1006px;top:39px;color:#000;">Dubbel 2007</span><span class="g" style="left:1083px;top:39px;color:#000;letter-spacing:0.25px">geä. 6/2011</span><span class="g" style="left:14px;top:57px;color:#000;">EN-GMB-350-10</span><span class="g" style="right:962px;top:57px;color:#000">7</span><span class="g" style="left:204px;top:57px;color:#000;">GTS(schwarzer Temperguss)</span><span class="g" style="right:742px;top:57px;color:#000">0</span><span class="g" style="left:424px;top:57px;color:#000;">keine</span><span class="g" style="right:550px;top:57px;color:#000">150</span><span class="g" style="right:479px;top:57px;color:#000">350</span><span class="g" style="right:414px;top:57px;color:#000">260</span><span class="g" style="right:349px;top:57px;color:#000">200000</span><span class="g" style="right:284px;top:57px;color:#000">0,3</span><span class="g" style="right:219px;top:57px;color:#000">7,4</span><span class="g" style="left:947px;top:57px;color:#000;">003</span><span class="g" style="left:1006px;top:57px;color:#000;">Dubbel 2007</span><span class="g" style="left:1083px;top:57px;color:#000;letter-spacing:0.25px">geä. 6/2011</span><span class="g" style="left:14px;top:75px;color:#000;">EN-GMB-650-02</span><span class="g" style="right:962px;top:75px;color:#000">7</span><span class="g" style="left:204px;top:75px;color:#000;">GTS(schwarzer Temperguss)</span><span class="g" style="right:742px;top:75px;color:#000">0</span><span class="g" style="left:424px;top:75px;color:#000;">keine</span><span class="g" style="right:550px;top:75px;color:#000">235</span><span class="g" style="right:479px;top:75px;color:#000">470</span><span class="g" style="right:414px;top:75px;color:#000">360</span><span class="g" style="right:349px;top:75px;color:#000">200000</span><span class="g" style="right:284px;top:75px;color:#000">0,3</span><span class="g" style="right:219px;top:75px;color:#000">7,4</span><span class="g" style="left:947px;top:75px;color:#000;">004</span><span class="g" style="left:1006px;top:75px;color:#000;">Dubbel 2007</span><span class="g" style="left:1083px;top:75px;color:#000;letter-spacing:0.25px">geä. 6/2011</span><span class="g" style="left:14px;top:93px;color:#000;">EN-GJS-400 (GGG40)</span><span class="g" style="right:962px;top:93px;color:#000">4</span><span class="g" style="left:204px;top:93px;color:#000;">GGG perl./bainitisch</span><span class="g" style="right:742px;top:93px;color:#000">0</span><span class="g" style="left:424px;top:93px;color:#000;">keine</span><span class="g" style="right:550px;top:93px;color:#000">180</span><span class="g" style="right:479px;top:93px;color:#000">470</span><span class="g" style="right:414px;top:93px;color:#000">360</span><span class="g" style="right:349px;top:93px;color:#000">170000</span><span class="g" style="right:284px;top:93px;color:#000">0,28</span><span class="g" style="right:219px;top:93px;color:#000">7,2</span><span class="g" style="left:947px;top:93px;color:#000;">005</span><span class="g" style="left:1006px;top:93px;color:#000;">Dubbel 2007</span><span class="g" style="left:1083px;top:93px;color:#000;letter-spacing:0.25px">geä. 6/2011</span><span class="g" style="left:14px;top:111px;color:#000;">EN-GJS-600 (GGG60)</span><span class="g" style="right:962px;top:111px;color:#000">4</span><span class="g" style="left:204px;top:111px;color:#000;">GGG perl./bainitisch</span><span class="g" style="right:742px;top:111px;color:#000">0</span><span class="g" style="left:424px;top:111px;color:#000;">keine</span><span class="g" style="right:550px;top:111px;color:#000">240</span><span class="g" style="right:479px;top:111px;color:#000">560</span><span class="g" style="right:414px;top:111px;color:#000">410</span><span class="g" style="right:349px;top:111px;color:#000">180000</span><span class="g" style="right:284px;top:111px;color:#000">0,28</span><span class="g" style="right:219px;top:111px;color:#000">7,2</span><span class="g" style="left:947px;top:111px;color:#000;">006</span><span class="g" style="left:1006px;top:111px;color:#000;">Dubbel 2007</span><span class="g" style="left:1083px;top:111px;color:#000;letter-spacing:0.25px">geä. 6/2011</span><span class="g" style="left:14px;top:129px;color:#000;">EN-GJS-1000 (GGG100)</span><span class="g" style="right:962px;top:129px;color:#000">4</span><span class="g" style="left:204px;top:129px;color:#000;">GGG perl./bainitisch</span><span class="g" style="right:742px;top:129px;color:#000">0</span><span class="g" style="left:424px;top:129px;color:#000;">keine</span><span class="g" style="right:550px;top:129px;color:#000">330</span><span class="g" style="right:479px;top:129px;color:#000">700</span><span class="g" style="right:414px;top:129px;color:#000">470</span><span class="g" style="right:349px;top:129px;color:#000">190000</span><span class="g" style="right:284px;top:129px;color:#000">0,29</span><span class="g" style="right:219px;top:129px;color:#000">7,2</span><span class="g" style="left:947px;top:129px;color:#000;">007</span><span class="g" style="left:1006px;top:129px;color:#000;">Dubbel 2007</span><span class="g" style="left:1083px;top:129px;color:#000;letter-spacing:0.25px">geä. 6/2011</span><span class="g" style="left:14px;top:147px;color:#000;">GS-52.1 (1.0552)</span><span class="g" style="right:962px;top:147px;color:#000">1</span><span class="g" style="left:204px;top:147px;color:#000;">Baustahl</span><span class="g" style="right:742px;top:147px;color:#000">0</span><span class="g" style="left:424px;top:147px;color:#000;">keine</span><span class="g" style="right:550px;top:147px;color:#000">160</span><span class="g" style="right:479px;top:147px;color:#000">280</span><span class="g" style="right:414px;top:147px;color:#000">230</span><span class="g" style="right:349px;top:147px;color:#000">200000</span><span class="g" style="right:284px;top:147px;color:#000">0,3</span><span class="g" style="right:219px;top:147px;color:#000">7,85</span><span class="g" style="left:947px;top:147px;color:#000;">008</span><span class="g" style="left:1006px;top:147px;color:#000;">Dubbel 2007</span><span class="g" style="left:1083px;top:147px;color:#000;letter-spacing:0.25px">geä. 6/2011</span><span class="g" style="left:14px;top:165px;color:#000;">GS-60.1 (1.0558)</span><span class="g" style="right:962px;top:165px;color:#000">1</span><span class="g" style="left:204px;top:165px;color:#000;">Baustahl</span><span class="g" style="right:742px;top:165px;color:#000">0</span><span class="g" style="left:424px;top:165px;color:#000;">keine</span><span class="g" style="right:550px;top:165px;color:#000">180</span><span class="g" style="right:479px;top:165px;color:#000">315</span><span class="g" style="right:414px;top:165px;color:#000">250</span><span class="g" style="right:349px;top:165px;color:#000">200000</span><span class="g" style="right:284px;top:165px;color:#000">0,3</span><span class="g" style="right:219px;top:165px;color:#000">7,85</span><span class="g" style="left:947px;top:165px;color:#000;">009</span><span class="g" style="left:1006px;top:165px;color:#000;">Dubbel 2007</span><span class="g" style="left:1083px;top:165px;color:#000;letter-spacing:0.25px">geä. 6/2011</span><span class="g" style="left:14px;top:183px;color:#000;">S235JR (St 37)</span><span class="g" style="right:962px;top:183px;color:#000">1</span><span class="g" style="left:204px;top:183px;color:#000;">Baustahl</span><span class="g" style="right:742px;top:183px;color:#000">0</span><span class="g" style="left:424px;top:183px;color:#000;">keine</span><span class="g" style="right:550px;top:183px;color:#000">120</span><span class="g" style="right:479px;top:183px;color:#000">315</span><span class="g" style="right:414px;top:183px;color:#000">250</span><span class="g" style="right:349px;top:183px;color:#000">210000</span><span class="g" style="right:284px;top:183px;color:#000">0,3</span><span class="g" style="right:219px;top:183px;color:#000">7,85</span><span class="g" style="left:947px;top:183px;color:#000;">010</span><span class="g" style="left:1006px;top:183px;color:#000;">Dubbel 2007</span><span class="g" style="left:1083px;top:183px;color:#000;letter-spacing:0.25px">1.0037, geä. 6/2011</span><span class="g" style="left:14px;top:201px;color:#000;">E295 (St 50)</span><span class="g" style="right:962px;top:201px;color:#000">1</span><span class="g" style="left:204px;top:201px;color:#000;">Baustahl</span><span class="g" style="right:742px;top:201px;color:#000">0</span><span class="g" style="left:424px;top:201px;color:#000;">keine</span><span class="g" style="right:550px;top:201px;color:#000">160</span><span class="g" style="right:479px;top:201px;color:#000">350</span><span class="g" style="right:414px;top:201px;color:#000">280</span><span class="g" style="right:349px;top:201px;color:#000">210000</span><span class="g" style="right:284px;top:201px;color:#000">0,3</span><span class="g" style="right:219px;top:201px;color:#000">7,85</span><span class="g" style="left:947px;top:201px;color:#000;">011</span><span class="g" style="left:1006px;top:201px;color:#000;">Dubbel 2007</span><span class="g" style="left:1083px;top:201px;color:#000;letter-spacing:0.25px">1.0050, geä. 6/2011</span><span class="g" style="left:14px;top:219px;color:#000;">E335 (St 60)</span><span class="g" style="right:962px;top:219px;color:#000">1</span><span class="g" style="left:204px;top:219px;color:#000;">Baustahl</span><span class="g" style="right:742px;top:219px;color:#000">0</span><span class="g" style="left:424px;top:219px;color:#000;">keine</span><span class="g" style="right:550px;top:219px;color:#000">190</span><span class="g" style="right:479px;top:219px;color:#000">375</span><span class="g" style="right:414px;top:219px;color:#000">320</span><span class="g" style="right:349px;top:219px;color:#000">210000</span><span class="g" style="right:284px;top:219px;color:#000">0,3</span><span class="g" style="right:219px;top:219px;color:#000">7,85</span><span class="g" style="left:947px;top:219px;color:#000;">012</span><span class="g" style="left:1006px;top:219px;color:#000;">Dubbel 2007</span><span class="g" style="left:1083px;top:219px;color:#000;letter-spacing:0.25px">geä. 6/2011</span><span class="g" style="left:14px;top:237px;color:#000;">2C45N (Ck 45N)</span><span class="g" style="right:962px;top:237px;color:#000">3</span><span class="g" style="left:204px;top:237px;color:#000;">Verguetungsstahl</span><span class="g" style="right:742px;top:237px;color:#000">1</span><span class="g" style="left:424px;top:237px;color:#000;">verguetet</span><span class="g" style="right:550px;top:237px;color:#000">190</span><span class="g" style="right:479px;top:237px;color:#000">470</span><span class="g" style="right:414px;top:237px;color:#000">320</span><span class="g" style="right:349px;top:237px;color:#000">210000</span><span class="g" style="right:284px;top:237px;color:#000">0,3</span><span class="g" style="right:219px;top:237px;color:#000">7,85</span><span class="g" style="left:947px;top:237px;color:#000;">013</span><span class="g" style="left:1006px;top:237px;color:#000;">Dubbel 2007</span><span class="g" style="left:1083px;top:237px;color:#000;letter-spacing:0.25px">geä. 6/2011</span><span class="g" style="left:14px;top:255px;color:#000;">34CrMo4V (1.7220)</span><span class="g" style="right:962px;top:255px;color:#000">3</span><span class="g" style="left:204px;top:255px;color:#000;">Verguetungsstahl</span><span class="g" style="right:742px;top:255px;color:#000">1</span><span class="g" style="left:424px;top:255px;color:#000;">verguetet</span><span class="g" style="right:550px;top:255px;color:#000">270</span><span class="g" style="right:479px;top:255px;color:#000">540</span><span class="g" style="right:414px;top:255px;color:#000">440</span><span class="g" style="right:349px;top:255px;color:#000">210000</span><span class="g" style="right:284px;top:255px;color:#000">0,3</span><span class="g" style="right:219px;top:255px;color:#000">7,85</span><span class="g" style="left:947px;top:255px;color:#000;">014</span><span class="g" style="left:1006px;top:255px;color:#000;">Dubbel 2007</span><span class="g" style="left:1083px;top:255px;color:#000;letter-spacing:0.25px">geä. 6/2011</span><span class="g" style="left:14px;top:273px;color:#000;">42CrMo4V (1.7225)</span><span class="g" style="right:962px;top:273px;color:#000">3</span><span class="g" style="left:204px;top:273px;color:#000;">Verguetungsstahl</span><span class="g" style="right:742px;top:273px;color:#000">1</span><span class="g" style="left:424px;top:273px;color:#000;">verguetet</span><span class="g" style="right:550px;top:273px;color:#000">300</span><span class="g" style="right:479px;top:273px;color:#000">580</span><span class="g" style="right:414px;top:273px;color:#000">460</span><span class="g" style="right:349px;top:273px;color:#000">210000</span><span class="g" style="right:284px;top:273px;color:#000">0,3</span><span class="g" style="right:219px;top:273px;color:#000">7,85</span><span class="g" style="left:947px;top:273px;color:#000;">015</span><span class="g" style="left:1006px;top:273px;color:#000;">Dubbel 2007</span><span class="g" style="left:1083px;top:273px;color:#000;letter-spacing:0.25px">geä. 6/2011</span><span class="g" style="left:14px;top:291px;color:#000;">34CrNiMo6V (1.6582)</span><span class="g" style="right:962px;top:291px;color:#000">3</span><span class="g" style="left:204px;top:291px;color:#000;">Verguetungsstahl</span><span class="g" style="right:742px;top:291px;color:#000">1</span><span class="g" style="left:424px;top:291px;color:#000;">verguetet</span><span class="g" style="right:550px;top:291px;color:#000">310</span><span class="g" style="right:479px;top:291px;color:#000">590</span><span class="g" style="right:414px;top:291px;color:#000">470</span><span class="g" style="right:349px;top:291px;color:#000">210000</span><span class="g" style="right:284px;top:291px;color:#000">0,3</span><span class="g" style="right:219px;top:291px;color:#000">7,85</span><span class="g" style="left:947px;top:291px;color:#000;">016</span><span class="g" style="left:1006px;top:291px;color:#000;">Dubbel 2007</span><span class="g" style="left:1083px;top:291px;color:#000;letter-spacing:0.25px">geä. 6/2011</span><span class="g" style="left:14px;top:309px;color:#000;">2C45 (Ck 45)</span><span class="g" style="right:962px;top:309px;color:#000">3</span><span class="g" style="left:204px;top:309px;color:#000;">Verguetungsstahl</span><span class="g" style="right:742px;top:309px;color:#000">4</span><span class="g" style="left:424px;top:309px;color:#000;">flammgehaertet</span><span class="g" style="right:550px;top:309px;color:#000">500</span><span class="g" style="right:479px;top:309px;color:#000">980</span><span class="g" style="right:414px;top:309px;color:#000">460</span><span class="g" style="right:349px;top:309px;color:#000">210000</span><span class="g" style="right:284px;top:309px;color:#000">0,3</span><span class="g" style="right:219px;top:309px;color:#000">7,85</span><span class="g" style="left:947px;top:309px;color:#000;">017</span><span class="g" style="left:1006px;top:309px;color:#000;">Dubbel 2007</span><span class="g" style="left:1083px;top:309px;color:#000;letter-spacing:0.25px">geä. 6/2011</span><span class="g" style="left:14px;top:327px;color:#000;">34CrMo4 (1.7220)</span><span class="g" style="right:962px;top:327px;color:#000">3</span><span class="g" style="left:204px;top:327px;color:#000;">Verguetungsstahl</span><span class="g" style="right:742px;top:327px;color:#000">4</span><span class="g" style="left:424px;top:327px;color:#000;">flammgehaertet</span><span class="g" style="right:550px;top:327px;color:#000">500</span><span class="g" style="right:479px;top:327px;color:#000">980</span><span class="g" style="right:414px;top:327px;color:#000">460</span><span class="g" style="right:349px;top:327px;color:#000">210000</span><span class="g" style="right:284px;top:327px;color:#000">0,3</span><span class="g" style="right:219px;top:327px;color:#000">7,85</span><span class="g" style="left:947px;top:327px;color:#000;">018</span><span class="g" style="left:1006px;top:327px;color:#000;">Dubbel 2007</span><span class="g" style="left:1083px;top:327px;color:#000;letter-spacing:0.25px">geä. 6/2011</span><span class="g" style="left:14px;top:345px;color:#000;">42CrMo4 (1.7225)</span><span class="g" style="right:962px;top:345px;color:#000">3</span><span class="g" style="left:204px;top:345px;color:#000;">Verguetungsstahl</span><span class="g" style="right:742px;top:345px;color:#000">4</span><span class="g" style="left:424px;top:345px;color:#000;">flammgehaertet</span><span class="g" style="right:550px;top:345px;color:#000">500</span><span class="g" style="right:479px;top:345px;color:#000">1060</span><span class="g" style="right:414px;top:345px;color:#000">540</span><span class="g" style="right:349px;top:345px;color:#000">210000</span><span class="g" style="right:284px;top:345px;color:#000">0,3</span><span class="g" style="right:219px;top:345px;color:#000">7,85</span><span class="g" style="left:947px;top:345px;color:#000;">019</span><span class="g" style="left:1006px;top:345px;color:#000;">Dubbel 2007</span><span class="g" style="left:1083px;top:345px;color:#000;letter-spacing:0.25px">geä. 6/2011</span><span class="g" style="left:14px;top:363px;color:#000;">34CrNiMo6 (1.6582)</span><span class="g" style="right:962px;top:363px;color:#000">3</span><span class="g" style="left:204px;top:363px;color:#000;">Verguetungsstahl</span><span class="g" style="right:742px;top:363px;color:#000">4</span><span class="g" style="left:424px;top:363px;color:#000;">flammgehaertet</span><span class="g" style="right:550px;top:363px;color:#000">500</span><span class="g" style="right:479px;top:363px;color:#000">1060</span><span class="g" style="right:414px;top:363px;color:#000">540</span><span class="g" style="right:349px;top:363px;color:#000">210000</span><span class="g" style="right:284px;top:363px;color:#000">0,3</span><span class="g" style="right:219px;top:363px;color:#000">7,85</span><span class="g" style="left:947px;top:363px;color:#000;">020</span><span class="g" style="left:1006px;top:363px;color:#000;">Dubbel 2007</span><span class="g" style="left:1083px;top:363px;color:#000;letter-spacing:0.25px">geä. 6/2011</span><span class="g" style="left:14px;top:381px;color:#000;">42CrMo4V (1.7225)</span><span class="g" style="right:962px;top:381px;color:#000">3</span><span class="g" style="left:204px;top:381px;color:#000;">Verguetungsstahl</span><span class="g" style="right:742px;top:381px;color:#000">6</span><span class="g" style="left:424px;top:381px;color:#000;">badnitriert</span><span class="g" style="right:550px;top:381px;color:#000">500</span><span class="g" style="right:479px;top:381px;color:#000">780</span><span class="g" style="right:414px;top:381px;color:#000">520</span><span class="g" style="right:349px;top:381px;color:#000">210000</span><span class="g" style="right:284px;top:381px;color:#000">0,3</span><span class="g" style="right:219px;top:381px;color:#000">7,85</span><span class="g" style="left:947px;top:381px;color:#000;">021</span><span class="g" style="left:1006px;top:381px;color:#000;">Dubbel 2007</span><span class="g" style="left:14px;top:399px;color:#000;">16MnCr5V (1.7131)</span><span class="g" style="right:962px;top:399px;color:#000">2</span><span class="g" style="left:204px;top:399px;color:#000;">Einsatzstahl</span><span class="g" style="right:742px;top:399px;color:#000">6</span><span class="g" style="left:424px;top:399px;color:#000;">badnitriert</span><span class="g" style="right:550px;top:399px;color:#000">500</span><span class="g" style="right:479px;top:399px;color:#000">780</span><span class="g" style="right:414px;top:399px;color:#000">520</span><span class="g" style="right:349px;top:399px;color:#000">210000</span><span class="g" style="right:284px;top:399px;color:#000">0,3</span><span class="g" style="right:219px;top:399px;color:#000">7,85</span><span class="g" style="left:947px;top:399px;color:#000;">022</span><span class="g" style="left:1006px;top:399px;color:#000;">Dubbel 2007</span><span class="g" style="left:14px;top:417px;color:#000;">31CrMoV9V (1.8519)</span><span class="g" style="right:962px;top:417px;color:#000">2</span><span class="g" style="left:204px;top:417px;color:#000;">Einsatzstahl</span><span class="g" style="right:742px;top:417px;color:#000">6</span><span class="g" style="left:424px;top:417px;color:#000;">badnitriert</span><span class="g" style="right:550px;top:417px;color:#000">700</span><span class="g" style="right:479px;top:417px;color:#000">1125</span><span class="g" style="right:414px;top:417px;color:#000">540</span><span class="g" style="right:349px;top:417px;color:#000">210000</span><span class="g" style="right:284px;top:417px;color:#000">0,3</span><span class="g" style="right:219px;top:417px;color:#000">7,85</span><span class="g" style="left:947px;top:417px;color:#000;">023</span><span class="g" style="left:1006px;top:417px;color:#000;">Dubbel 2007</span><span class="g" style="left:1083px;top:417px;color:#000;letter-spacing:0.25px">geä. 6/2011</span><span class="g" style="left:14px;top:435px;color:#000;">15CrMoV5-9V (1.7735)</span><span class="g" style="right:962px;top:435px;color:#000">2</span><span class="g" style="left:204px;top:435px;color:#000;">Einsatzstahl</span><span class="g" style="right:742px;top:435px;color:#000">6</span><span class="g" style="left:424px;top:435px;color:#000;">badnitriert</span><span class="g" style="right:550px;top:435px;color:#000">700</span><span class="g" style="right:479px;top:435px;color:#000">1125</span><span class="g" style="right:414px;top:435px;color:#000">540</span><span class="g" style="right:349px;top:435px;color:#000">210000</span><span class="g" style="right:284px;top:435px;color:#000">0,3</span><span class="g" style="right:219px;top:435px;color:#000">7,85</span><span class="g" style="left:947px;top:435px;color:#000;">024</span><span class="g" style="left:1006px;top:435px;color:#000;">Dubbel 2007</span><span class="g" style="left:1083px;top:435px;color:#000;letter-spacing:0.25px">geä. 6/2011</span><span class="g" style="left:14px;top:453px;color:#000;">1C45N (1.0503)</span><span class="g" style="right:962px;top:453px;color:#000">3</span><span class="g" style="left:204px;top:453px;color:#000;">Verguetungsstahl</span><span class="g" style="right:742px;top:453px;color:#000">5</span><span class="g" style="left:424px;top:453px;color:#000;">gasnitriert</span><span class="g" style="right:550px;top:453px;color:#000">420</span><span class="g" style="right:479px;top:453px;color:#000">650</span><span class="g" style="right:414px;top:453px;color:#000">450</span><span class="g" style="right:349px;top:453px;color:#000">210000</span><span class="g" style="right:284px;top:453px;color:#000">0,3</span><span class="g" style="right:219px;top:453px;color:#000">7,85</span><span class="g" style="left:947px;top:453px;color:#000;">026</span><span class="g" style="left:1006px;top:453px;color:#000;">Dubbel 2007</span><span class="g" style="left:1083px;top:453px;color:#000;letter-spacing:0.25px">geä. 6/2011</span><span class="g" style="left:14px;top:471px;color:#000;">16MnCr5N (1.7131)</span><span class="g" style="right:962px;top:471px;color:#000">2</span><span class="g" style="left:204px;top:471px;color:#000;">Einsatzstahl</span><span class="g" style="right:742px;top:471px;color:#000">5</span><span class="g" style="left:424px;top:471px;color:#000;">gasnitriert</span><span class="g" style="right:550px;top:471px;color:#000">500</span><span class="g" style="right:479px;top:471px;color:#000">650</span><span class="g" style="right:414px;top:471px;color:#000">450</span><span class="g" style="right:349px;top:471px;color:#000">210000</span><span class="g" style="right:284px;top:471px;color:#000">0,3</span><span class="g" style="right:219px;top:471px;color:#000">7,85</span><span class="g" style="left:947px;top:471px;color:#000;">027</span><span class="g" style="left:1006px;top:471px;color:#000;">Dubbel 2007</span><span class="g" style="left:1083px;top:471px;color:#000;letter-spacing:0.25px">geä. 6/2011</span><span class="g" style="left:14px;top:489px;color:#000;">42CrMo4 (1.7725)</span><span class="g" style="right:962px;top:489px;color:#000">3</span><span class="g" style="left:204px;top:489px;color:#000;">Verguetungsstahl</span><span class="g" style="right:742px;top:489px;color:#000">5</span><span class="g" style="left:424px;top:489px;color:#000;">gasnitriert</span><span class="g" style="right:550px;top:489px;color:#000">500</span><span class="g" style="right:479px;top:489px;color:#000">650</span><span class="g" style="right:414px;top:489px;color:#000">450</span><span class="g" style="right:349px;top:489px;color:#000">210000</span><span class="g" style="right:284px;top:489px;color:#000">0,3</span><span class="g" style="right:219px;top:489px;color:#000">7,85</span><span class="g" style="left:947px;top:489px;color:#000;">028</span><span class="g" style="left:1006px;top:489px;color:#000;">Dubbel 2007</span><span class="g" style="left:1083px;top:489px;color:#000;letter-spacing:0.25px">geä. 6/2011</span><span class="g" style="left:14px;top:507px;color:#000;">34Cr4V (1.7033)</span><span class="g" style="right:962px;top:507px;color:#000">3</span><span class="g" style="left:204px;top:507px;color:#000;">Verguetungsstahl</span><span class="g" style="right:742px;top:507px;color:#000">5</span><span class="g" style="left:424px;top:507px;color:#000;">gasnitriert</span><span class="g" style="right:550px;top:507px;color:#000">550</span><span class="g" style="right:479px;top:507px;color:#000">1100</span><span class="g" style="right:414px;top:507px;color:#000">600</span><span class="g" style="right:349px;top:507px;color:#000">210000</span><span class="g" style="right:284px;top:507px;color:#000">0,3</span><span class="g" style="right:219px;top:507px;color:#000">7,85</span><span class="g" style="left:947px;top:507px;color:#000;">029</span><span class="g" style="left:1006px;top:507px;color:#000;">Dubbel 2007</span><span class="g" style="left:1083px;top:507px;color:#000;letter-spacing:0.25px">geä. 6/2011</span><span class="g" style="left:14px;top:525px;color:#000;">16MnCr5 (1.7131)</span><span class="g" style="right:962px;top:525px;color:#000">2</span><span class="g" style="left:204px;top:525px;color:#000;">Einsatzstahl</span><span class="g" style="right:742px;top:525px;color:#000">2</span><span class="g" style="left:424px;top:525px;color:#000;">einsatzgehaertet</span><span class="g" style="right:550px;top:525px;color:#000">650</span><span class="g" style="right:479px;top:525px;color:#000">1300</span><span class="g" style="right:414px;top:525px;color:#000">620</span><span class="g" style="right:349px;top:525px;color:#000">210000</span><span class="g" style="right:284px;top:525px;color:#000">0,3</span><span class="g" style="right:219px;top:525px;color:#000">7,85</span><span class="g" style="left:947px;top:525px;color:#000;">030</span><span class="g" style="left:1006px;top:525px;color:#000;">Dubbel 2007</span></div><div style="left:1171px;top:80px;width:16px;height:542px;background:repeating-conic-gradient(#FFFFFF 0 25%,#D4D0C8 0 50%) 0 0/2px 2px;"></div><div style="left:1171px;top:80px;width:16px;height:16px;background:#D4D0C8;"></div><div style="left:1171px;top:80px;width:16px;height:1px;background:#D4D0C8;"></div><div style="left:1171px;top:80px;width:1px;height:16px;background:#D4D0C8;"></div><div style="left:1171px;top:95px;width:16px;height:1px;background:#404040;"></div><div style="left:1186px;top:80px;width:1px;height:16px;background:#404040;"></div><div style="left:1172px;top:81px;width:14px;height:1px;background:#FFFFFF;"></div><div style="left:1172px;top:81px;width:1px;height:14px;background:#FFFFFF;"></div><div style="left:1172px;top:94px;width:14px;height:1px;background:#808080;"></div><div style="left:1185px;top:81px;width:1px;height:14px;background:#808080;"></div><svg width="16" height="16" style="position:absolute;left:1171px;top:80px" shape-rendering="crispEdges"><rect x="7" y="6" width="1" height="1" fill="#000"/><rect x="6" y="7" width="3" height="1" fill="#000"/><rect x="5" y="8" width="5" height="1" fill="#000"/><rect x="4" y="9" width="7" height="1" fill="#000"/></svg><div style="left:1171px;top:96px;width:16px;height:77px;background:#D4D0C8;"></div><div style="left:1171px;top:96px;width:16px;height:1px;background:#D4D0C8;"></div><div style="left:1171px;top:96px;width:1px;height:77px;background:#D4D0C8;"></div><div style="left:1171px;top:172px;width:16px;height:1px;background:#404040;"></div><div style="left:1186px;top:96px;width:1px;height:77px;background:#404040;"></div><div style="left:1172px;top:97px;width:14px;height:1px;background:#FFFFFF;"></div><div style="left:1172px;top:97px;width:1px;height:75px;background:#FFFFFF;"></div><div style="left:1172px;top:171px;width:14px;height:1px;background:#808080;"></div><div style="left:1185px;top:97px;width:1px;height:75px;background:#808080;"></div><div style="left:1171px;top:606px;width:16px;height:16px;background:#D4D0C8;"></div><div style="left:1171px;top:606px;width:16px;height:1px;background:#D4D0C8;"></div><div style="left:1171px;top:606px;width:1px;height:16px;background:#D4D0C8;"></div><div style="left:1171px;top:621px;width:16px;height:1px;background:#404040;"></div><div style="left:1186px;top:606px;width:1px;height:16px;background:#404040;"></div><div style="left:1172px;top:607px;width:14px;height:1px;background:#FFFFFF;"></div><div style="left:1172px;top:607px;width:1px;height:14px;background:#FFFFFF;"></div><div style="left:1172px;top:620px;width:14px;height:1px;background:#808080;"></div><div style="left:1185px;top:607px;width:1px;height:14px;background:#808080;"></div><svg width="16" height="16" style="position:absolute;left:1171px;top:606px" shape-rendering="crispEdges"><rect x="4" y="6" width="7" height="1" fill="#000"/><rect x="5" y="7" width="5" height="1" fill="#000"/><rect x="6" y="8" width="3" height="1" fill="#000"/><rect x="7" y="9" width="1" height="1" fill="#000"/></svg><div style="left:10px;top:622px;width:1161px;height:16px;background:repeating-conic-gradient(#FFFFFF 0 25%,#D4D0C8 0 50%) 0 0/2px 2px;"></div><div style="left:10px;top:622px;width:16px;height:16px;background:#D4D0C8;"></div><div style="left:10px;top:622px;width:16px;height:1px;background:#D4D0C8;"></div><div style="left:10px;top:622px;width:1px;height:16px;background:#D4D0C8;"></div><div style="left:10px;top:637px;width:16px;height:1px;background:#404040;"></div><div style="left:25px;top:622px;width:1px;height:16px;background:#404040;"></div><div style="left:11px;top:623px;width:14px;height:1px;background:#FFFFFF;"></div><div style="left:11px;top:623px;width:1px;height:14px;background:#FFFFFF;"></div><div style="left:11px;top:636px;width:14px;height:1px;background:#808080;"></div><div style="left:24px;top:623px;width:1px;height:14px;background:#808080;"></div><svg width="16" height="16" style="position:absolute;left:10px;top:622px" shape-rendering="crispEdges"><rect x="5" y="7" width="1" height="1" fill="#000"/><rect x="6" y="6" width="1" height="3" fill="#000"/><rect x="7" y="5" width="1" height="5" fill="#000"/><rect x="8" y="4" width="1" height="7" fill="#000"/></svg><div style="left:26px;top:622px;width:16px;height:16px;background:#D4D0C8;"></div><div style="left:26px;top:622px;width:16px;height:1px;background:#D4D0C8;"></div><div style="left:26px;top:622px;width:1px;height:16px;background:#D4D0C8;"></div><div style="left:26px;top:637px;width:16px;height:1px;background:#404040;"></div><div style="left:41px;top:622px;width:1px;height:16px;background:#404040;"></div><div style="left:27px;top:623px;width:14px;height:1px;background:#FFFFFF;"></div><div style="left:27px;top:623px;width:1px;height:14px;background:#FFFFFF;"></div><div style="left:27px;top:636px;width:14px;height:1px;background:#808080;"></div><div style="left:40px;top:623px;width:1px;height:14px;background:#808080;"></div><div style="left:1155px;top:622px;width:16px;height:16px;background:#D4D0C8;"></div><div style="left:1155px;top:622px;width:16px;height:1px;background:#D4D0C8;"></div><div style="left:1155px;top:622px;width:1px;height:16px;background:#D4D0C8;"></div><div style="left:1155px;top:637px;width:16px;height:1px;background:#404040;"></div><div style="left:1170px;top:622px;width:1px;height:16px;background:#404040;"></div><div style="left:1156px;top:623px;width:14px;height:1px;background:#FFFFFF;"></div><div style="left:1156px;top:623px;width:1px;height:14px;background:#FFFFFF;"></div><div style="left:1156px;top:636px;width:14px;height:1px;background:#808080;"></div><div style="left:1169px;top:623px;width:1px;height:14px;background:#808080;"></div><svg width="16" height="16" style="position:absolute;left:1155px;top:622px" shape-rendering="crispEdges"><rect x="6" y="4" width="1" height="7" fill="#000"/><rect x="7" y="5" width="1" height="5" fill="#000"/><rect x="8" y="6" width="1" height="3" fill="#000"/><rect x="9" y="7" width="1" height="1" fill="#000"/></svg><div style="left:1171px;top:622px;width:16px;height:16px;background:#D4D0C8;"></div><svg width="16" height="16" style="position:absolute;left:1171px;top:622px" shape-rendering="crispEdges"><path d="M16,4 L4,16 M16,5 L5,16 M16,8 L8,16 M16,9 L9,16 M16,12 L12,16 M16,13 L13,16" stroke="#808080" stroke-width="1"/><path d="M16,3 L3,16 M16,7 L7,16 M16,11 L11,16" stroke="#FFFFFF" stroke-width="1"/></svg></body></html>
